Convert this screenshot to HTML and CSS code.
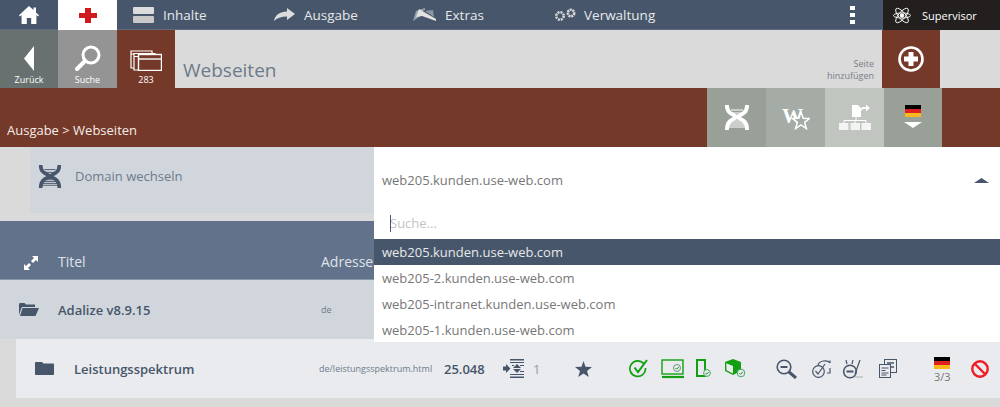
FILE: index.html
```html
<!DOCTYPE html>
<html lang="de">
<head>
<meta charset="utf-8">
<title>Webseiten</title>
<link rel="stylesheet" href="styles.css">
</head>
<body>
<nav class="topbar">
  <a class="tile-home"><svg width="20" height="18" viewBox="0 0 20 18"><path d="M10 0 0 9.2l1 1.2 1.6-1.4V18h5.2v-6h4.400v6h5.200V9l1.600 1.400 1-1.200-3-2.800V1.500h-2.500v2.600z" fill="#fff"/></svg></a>
  <a class="tile-cross"><svg width="18" height="15" viewBox="0 0 18 15"><path d="M6 0h6v5h6v5h-6v5H6v-5H0V5h6z" fill="#cf1b1e"/></svg></a>
  <div class="nav-items">
    <a class="nav-item"><span class="nav-icon"><svg width="21" height="16" viewBox="0 0 21 16"><rect width="21" height="7" rx="1" fill="#dcdcdc"/><rect y="9" width="21" height="7" rx="1" fill="#c9c9c9"/></svg></span>Inhalte</a>
    <a class="nav-item"><span class="nav-icon"><svg width="21" height="13" viewBox="0 0 21 13"><path d="M13 0l8 6-8 6V8.500C7 8.500 3 10 0 13c1-6 6-9.500 13-9.500z" fill="#dcdcdc"/></svg></span>Ausgabe</a>
    <a class="nav-item nav-item-wide"><span class="nav-icon"><svg width="23" height="13" viewBox="0 0 23 13"><path d="M0 13 3 3l9-3v2L4.500 5 9 7l-9 6z" fill="#9aa3ad"/><path d="M6 1l17 10v2L9 8 3 9z" fill="#e2e2e2"/><path d="M12 3l8-1 1 7z" fill="#8d97a3"/></svg></span>Extras</a>
    <a class="nav-item"><span class="nav-icon"><svg width="22" height="13" viewBox="0 0 22 13"><circle cx="6" cy="8" r="3.700" fill="none" stroke="#d8d8d8" stroke-width="2.600" stroke-dasharray="2 .9"/><circle cx="17" cy="5" r="3.200" fill="none" stroke="#d8d8d8" stroke-width="2.600" stroke-dasharray="2 .7"/></svg></span>Verwaltung</a>
  </div>
  <div class="dots"><i></i><i></i><i></i></div>
  <a class="supervisor"><svg width="18" height="19" viewBox="0 0 18 19" fill="none" stroke="#fff" stroke-width=".9"><ellipse cx="9" cy="9.500" rx="9" ry="3.400" transform="rotate(50 9 9.500)"/><ellipse cx="9" cy="9.500" rx="9" ry="3.400" transform="rotate(-50 9 9.500)"/><ellipse cx="9" cy="9.500" rx="8.500" ry="2.600"/><circle cx="9" cy="9.500" r="1.800" fill="#fff"/></svg><span>Supervisor</span></a>
</nav>

<header class="titlebar">
  <a class="tile tile-back"><svg width="10" height="25" viewBox="0 0 10 25"><path d="M10 0v25L0 12.500z" fill="#fff"/></svg><small>Zurück</small></a>
  <a class="tile tile-search"><svg width="26" height="26" viewBox="0 0 26 26" fill="none" stroke="#fff"><circle cx="16" cy="10" r="8" stroke-width="3"/><path d="M10 16 2 24" stroke-width="4" stroke-linecap="round"/></svg><small>Suche</small></a>
  <a class="tile tile-count"><svg width="32" height="21" viewBox="0 0 32 21" fill="none" stroke="#fff" stroke-width="1.200"><path d="M1 1h21v3H1zM1 4v14h3" fill="#753929"/><path d="M4 3.500h21v3H4zM4 6.500V20h4" fill="#753929"/><rect x="8.500" y="4.500" width="23" height="16" fill="#753929" stroke-width="1.400"/><path d="M8.500 9h23" stroke-width="1.400"/></svg><small>283</small></a>
  <h1 class="page-title">Webseiten</h1>
  <div class="add-label">Seite<br>hinzufügen</div>
  <a class="tile tile-add"><svg width="26" height="26" viewBox="0 0 26 26"><circle cx="13" cy="13" r="11.500" fill="none" stroke="#fff" stroke-width="2.600"/><path d="M10.500 6h5v4.500H20v5h-4.500V20h-5v-4.500H6v-5h4.500z" fill="#fff"/></svg></a>
  <div class="title-end"></div>
</header>

<div class="crumbbar">
  <div class="crumbs">Ausgabe &gt; Webseiten</div>
  <a class="tool tool-a"><svg width="26" height="25" viewBox="0 0 26 25"><use href="#dna"/></svg></a>
  <a class="tool tool-b"><svg width="28" height="25" viewBox="0 0 28 25"><text class="wiki" x="0" y="18">W</text><path d="M19 7l2.200 6.200 6.500.2-5.100 4 1.800 6.200-5.400-3.600-5.400 3.600 1.800-6.200-5.100-4 6.500-.2z" fill="#a5aca5" stroke="#fff" stroke-width="1.500"/></svg></a>
  <a class="tool tool-c"><svg width="32" height="25" viewBox="0 0 32 25" fill="#fff"><path d="M13 0h6l3 3v9h-9z"/><path d="M24 5h4V2.500L32 6l-4 3.500V7h-2c-1 0-2 .500-3 2 0-2 1-4 1-4z" transform="translate(-1 -3)"/><path d="M17 12v3M5 19v-3.500h22V19M16 15.500V19" stroke="#fff" fill="none"/><rect y="18" width="9.500" height="7" opacity=".8"/><rect x="11.500" y="18" width="9.500" height="7" opacity=".8"/><rect x="22.500" y="18" width="9.500" height="7" opacity=".8"/></svg></a>
  <a class="tool tool-d"><svg width="16" height="12" viewBox="0 0 16 12"><use href="#flag"/></svg><svg width="18" height="6" viewBox="0 0 18 6"><path d="M0 0h18L9 6z" fill="#fff"/></svg></a>
  <div class="crumb-end"></div>
</div>

<main class="content">
  <section class="domain">
    <div class="domain-label">
      <svg width="24" height="25" viewBox="0 0 26 25"><use href="#dna"/></svg>
      <span>Domain wechseln</span>
    </div>
    <div class="select">
      <span>web205.kunden.use-web.com</span>
      <svg width="15" height="5" viewBox="0 0 15 5"><path d="M7.500 0 15 5H0z" fill="#47566a"/></svg>
      <div class="dropdown">
        <div class="search"><i class="caret"></i>Suche...</div>
        <div class="option selected">web205.kunden.use-web.com</div>
        <div class="option">web205-2.kunden.use-web.com</div>
        <div class="option">web205-intranet.kunden.use-web.com</div>
        <div class="option">web205-1.kunden.use-web.com</div>
      </div>
    </div>
  </section>

  <section class="table">
    <div class="thead">
      <svg class="expand" width="14" height="14" viewBox="0 0 14 14" fill="#fff"><path d="M8 0h6v6l-2-2-3 3-2-2 3-3zM0 14V8l2 2 3-3 2 2-3 3 2 2z"/></svg>
      <span class="th-title">Titel</span>
      <span class="th-address">Adresse</span>
    </div>
    <div class="row-root">
      <svg class="folder-open" width="20" height="13" viewBox="0 0 20 13"><path d="M0 1.500C0 .500.500 0 1.500 0h4l1.500 1.500h9V4H4C3 4 2.500 4.500 2 6L0 12z" fill="#47566a"/><path d="M3.500 5H20l-3 7c-.300.700-.700 1-1.500 1H1z" fill="#47566a"/></svg>
      <span class="row-title">Adalize v8.9.15</span>
      <span class="row-address">de</span>
    </div>
    <div class="row-child">
      <span class="cell"><svg width="19" height="13" viewBox="0 0 19 13"><path d="M1 0h6l1.500 1.500H18c.600 0 1 .400 1 1V12c0 .600-.400 1-1 1H1c-.600 0-1-.400-1-1V1c0-.600.400-1 1-1z" fill="#47566a"/></svg></span>
      <span class="cell row-title">Leistungsspektrum</span>
      <span class="cell row-address">de/leistungsspektrum.html</span>
      <span class="cell row-number">25.048</span>
      <span class="cell"><svg width="21" height="19" viewBox="0 0 21 19" fill="#47566a"><path d="M7 0h14v1.500H7zM7 17.500h14V19H7zM7 3h14v1H7zM7 15h14v1H7zM0 7.500h3V5l4.500 4.500L3 14v-2.500H0z"/><path d="M14 5l4 4h-8zM14 14l-4-4h8z"/><path d="M9 6h2v1H9zM17 6h4v1h-4zM17 12h4v1h-4z"/></svg></span>
      <span class="cell row-muted">1</span>
      <span class="cell"><svg width="17" height="16" viewBox="0 0 17 16"><path d="M8.500 0l2 5.700 6.500.3-5 3.900 1.800 6.100-5.300-3.500-5.300 3.500 1.800-6.100-5-3.900 6.500-.3z" fill="#47566a"/></svg></span>
      <span class="cell"><svg width="19" height="19" viewBox="0 0 19 19" fill="none" stroke="#12a012" stroke-width="1.700"><path d="M15 5a7.800 7.800 0 1 0 1.500 4"/><path d="M5.500 8.500 9 13l9-12" stroke-width="2"/></svg></span>
      <span class="cell"><svg width="24" height="20" viewBox="0 0 24 20" fill="none"><rect x="1" y="1" width="21" height="14" stroke="#12a012" stroke-width="1.400"/><path d="M1 18h22" stroke="#12a012" stroke-width="2.200"/><circle cx="16" cy="9" r="3.500" stroke="#6f8f80"/><path d="M14.500 9l1.200 1.200 2.200-2.400" stroke="#12a012"/></svg></span>
      <span class="cell"><svg width="14" height="19" viewBox="0 0 14 19"></svg><svg class="phone" width="15" height="19" viewBox="0 0 15 19" fill="none"><rect x="1" y="1" width="8" height="16" stroke="#12a012" stroke-width="2"/><circle cx="11" cy="14" r="3.400" fill="#e9ebee" stroke="#45a86f"/><path d="M9.500 14l1.200 1.200 2-2.200" stroke="#12a012"/></svg></span>
      <span class="cell"><svg width="21" height="19" viewBox="0 0 21 19"><path d="M8 0l8 3v9l-8 4-8-4V3z" fill="#12a012"/><path d="M1.200 4.200 8 7v7.500L1.500 11.300z" fill="#e9ebee"/><circle cx="16" cy="14" r="3.800" fill="#e9ebee" stroke="#45a86f"/><path d="M14.300 14l1.300 1.300 2.200-2.400" fill="none" stroke="#12a012"/></svg></span>
      <span class="cell"><svg width="21" height="20" viewBox="0 0 21 20" fill="none" stroke="#47566a"><circle cx="8" cy="8" r="6.800" stroke-width="1.600"/><path d="M4.500 8h7" stroke-width="2"/><path d="M13 13l7 6" stroke-width="3"/></svg></span>
      <span class="cell"><svg width="20" height="19" viewBox="0 0 20 19" fill="none" stroke="#47566a" stroke-width="1.200"><path d="M6 6c1-4 9-6 12-2M18 4V1.500M18 9v5h-3"/><circle cx="6.500" cy="12.500" r="5.800"/><path d="M3.500 12l2.500 3 7-10"/></svg></span>
      <span class="cell"><svg width="20" height="20" viewBox="0 0 20 20" fill="none" stroke="#47566a" stroke-width="1.200"><circle cx="7" cy="12.500" r="6.300" stroke-width="1.500"/><path d="M3.500 12.500h7" stroke-width="2"/><path d="M4 5 3 1M9 5l1-4M12 15 17 1"/><path d="M12 18h8" stroke="#b5bbc2"/></svg></span>
      <span class="cell"><svg width="18" height="19" viewBox="0 0 18 19" fill="none" stroke="#47566a"><rect x="5.500" y=".5" width="12" height="13"/><rect x=".5" y="5.500" width="11" height="13" fill="#e9ebee"/><path d="M2.500 9h7M2.500 11.500h4M2.500 14h7M2.500 16h5" stroke-width="1.200"/><path d="M8 4h7M11 8h4" stroke-width="1.400"/></svg></span>
      <span class="cell flag-cell"><svg width="16" height="12" viewBox="0 0 16 12"><use href="#flag"/></svg><span>3/3</span></span>
      <span class="cell"><svg width="18" height="18" viewBox="0 0 18 18" fill="none" stroke="#ee1c25" stroke-width="2.400"><circle cx="9" cy="9" r="7.700"/><path d="M3.500 3.500l11 11"/></svg></span>
    </div>
  </section>
</main>

<svg class="defs" width="0" height="0">
  <defs>
    <symbol id="dna" viewBox="0 0 26 25">
      <path class="dna-strand" d="M3 1c0 6 4 8 10 11 6 3 10 5 10 12M23 1c0 6-4 8-10 11-6 3-10 5-10 12"/>
      <path class="dna-rung" d="M7 5h12M6 8h14M8 16h10M6 18h14M5 20h16M5 22h16"/>
    </symbol>
    <symbol id="flag" viewBox="0 0 16 12">
      <rect width="16" height="4" fill="#000"/>
      <rect y="4" width="16" height="4" fill="#dd1f1f"/>
      <rect y="8" width="16" height="4" fill="#f6b81c"/>
    </symbol>
  </defs>
</svg>
</body>
</html>
```

FILE: styles.css
```css
* { box-sizing: border-box; }
html, body { margin: 0; padding: 0; }
body {
  width: 1000px;
  height: 407px;
  overflow: hidden;
  background: #dadada;
  font-family: "Open Sans", "Liberation Sans", sans-serif;
  color: #47566a;
}
a { color: inherit; text-decoration: none; }
small { font-size: 9px; line-height: 11px; color: #fff; }

.topbar { display: flex; height: 30px; background: #47566a; border-bottom: 1px solid #5d6b7d; }
.tile-home, .tile-cross { display: flex; align-items: center; justify-content: center; width: 58px; height: 30px; }
.tile-home { padding-top: 0; }
.tile-cross { background: #fff; width: 59px; padding-top: 1px; }
.nav-items { display: flex; padding-left: 16px; width: 733px; }
.nav-item { display: flex; align-items: center; width: 141px; font-size: 13.5px; color: #e6e8eb; }
.nav-item:nth-child(2) { width: 139px; }
.nav-icon { display: flex; align-items: center; width: 30px; flex: none; }
.nav-item-wide .nav-icon { width: 32px; }
.dots { display: flex; flex-direction: column; justify-content: center; gap: 3px; width: 33px; align-items: flex-start; }
.dots i { display: block; width: 5px; height: 4px; background: #fff; }
.supervisor { display: flex; align-items: center; width: 117px; height: 30px; background: #231f1e; padding-left: 10px; gap: 11px; font-size: 11px; color: #fff; }

.titlebar { display: flex; height: 58px; background: #dadada; }
.tile { display: flex; flex-direction: column; align-items: center; justify-content: flex-end; width: 58px; height: 58px; padding-bottom: 3px; gap: 3px; }
.tile-back { background: #697170; padding-bottom: 3px; }
.tile-search { background: #949494; width: 59px; margin-left: 0; }
.tile-count { background: #753929; }
.page-title { flex: 1; margin: 0; padding: 27px 0 0 8px; font-size: 19px; font-weight: 400; line-height: 26px; color: #6d7b8a; }
.add-label { padding-top: 28px; padding-right: 8px; font-size: 9px; line-height: 12px; text-align: right; color: #77808a; }
.tile-add { background: #753929; justify-content: center; padding-bottom: 0; }
.title-end { width: 59px; margin-left: 1px; }

.crumbbar { display: flex; height: 59px; background: #753929; }
.crumbs { width: 707px; padding: 32px 0 0 7px; font-size: 13px; line-height: 20px; color: #f3ece8; }
.tool { display: flex; flex-direction: column; align-items: center; justify-content: center; width: 59px; gap: 5px; }
.tool-a, .tool-d { background: #98a098; }
.tool-b { background: #a5aca5; }
.tool-c { background: #c0c5c0; }
.tool-d { width: 58px; padding-bottom: 2px; }
.crumb-end { flex: 1; }
.wiki { font-family: "Liberation Serif", serif; font-size: 21px; font-weight: 700; fill: #fff; }
.dna-strand { fill: none; stroke: currentColor; stroke-width: 4; stroke-linecap: round; }
.dna-rung { fill: none; stroke: currentColor; stroke-width: 1; }
.tool-a { color: #fff; }

.content { display: block; }
.domain { display: flex; height: 66px; margin-left: 30px; }
.domain-label { display: flex; align-items: center; gap: 13px; width: 344px; height: 66px; padding: 0 0 8px 8px; background: #d1d6dd; font-size: 13px; color: #6d7b8a; }
.domain-label svg { color: #47566a; }
.select { position: relative; display: flex; align-items: center; justify-content: space-between; flex: 1; padding: 0 11px 0 8px; background: #fff; font-size: 13px; color: #777; z-index: 2; }
.dropdown { position: absolute; left: 0; right: 0; top: 66px; background: #fff; }
.search { position: relative; height: 26px; padding-left: 16px; font-size: 13px; line-height: 20px; color: #c4c4c4; }
.caret { position: absolute; left: 16px; top: 2px; width: 1px; height: 17px; background: #47566a; }
.option { height: 26px; padding-left: 8px; font-size: 13px; line-height: 26px; color: #777; }
.option:last-child { height: 25px; }
.option.selected { background: #47566a; color: #e6e8eb; }

.table { margin-top: 8px; }
.thead { display: flex; align-items: flex-end; height: 59px; background: #62728a; border-bottom: 1px solid #8996a6; padding: 0 0 8px 24px; font-size: 14px; line-height: 18px; color: #dfe3e8; }
.expand { margin-bottom: 1px; }
.th-title { margin-left: 20px; width: 263px; }
.row-root { display: flex; align-items: center; height: 59px; background: #d1d6dd; padding-left: 19px; }
.folder-open { flex: none; }
.row-root .row-title { width: 263px; margin-left: 19px; }
.row-title { font-size: 13px; font-weight: 600; color: #47566a; }
.row-address { font-size: 9px; color: #6d7b8a; }
.row-child {
  display: grid;
  grid-template-columns: 39px 245px 125px 59px 30px 42px 54px 32px 35px 29px 51px 36px 31px 36px 55px 37px 1fr;
  align-items: center;
  height: 59px;
  margin-left: 16px;
  padding-left: 19px;
  background: #e9ebee;
}
.row-child .cell { display: flex; align-items: center; }
.row-number { font-size: 13px; font-weight: 600; }
.row-muted { font-size: 13px; color: #999; }
.phone { margin-left: -14px; }
.flag-cell { flex-direction: column; align-items: flex-start !important; gap: 1px; padding-top: 2px; font-size: 11px; line-height: 13px; color: #777; }
.defs { position: absolute; }
```
